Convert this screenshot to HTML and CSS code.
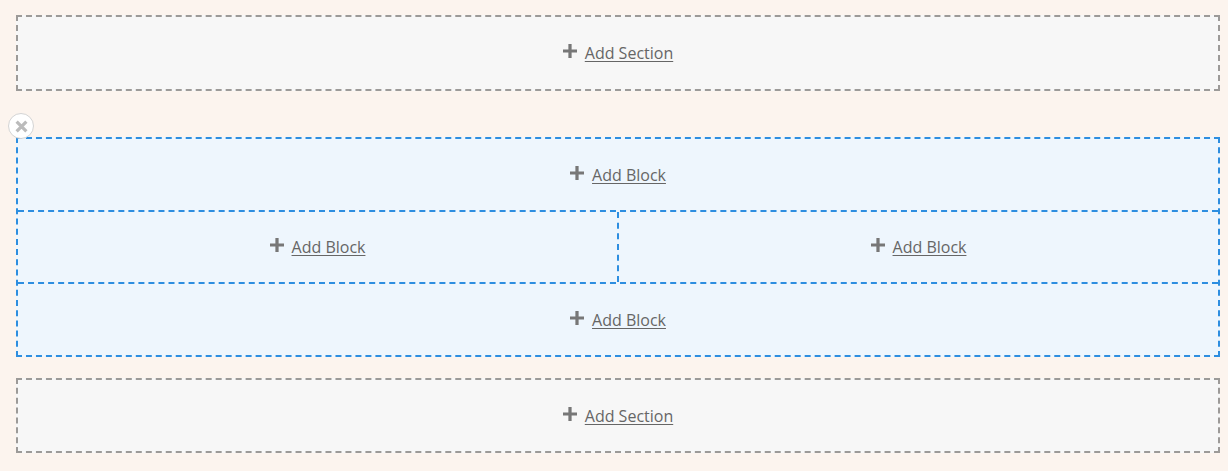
FILE: index.html
```html
<!DOCTYPE html>
<html lang="en">
<head>
  <meta charset="UTF-8" />
  <meta name="viewport" content="width=device-width, initial-scale=1.0"/>
  <title>Layout Builder</title>
  <link rel="stylesheet" href="styles.css">
</head>
<body>
  <div class="builder">
    <div class="add-section">
      <a href="#" class="add-link">
        <svg class="plus" viewBox="0 0 13 13"><path d="M6.5 0v13M0 6.5h13"/></svg>
        <span>Add Section</span>
      </a>
    </div>

    <div class="section">
      <button class="remove" title="Remove section">
        <svg viewBox="0 0 12 12"><path d="M1.5 1.5l9 9M10.5 1.5l-9 9"/></svg>
      </button>
      <div class="row row-first">
        <a href="#" class="add-link">
          <svg class="plus" viewBox="0 0 13 13"><path d="M6.5 0v13M0 6.5h13"/></svg>
          <span>Add Block</span>
        </a>
      </div>
      <div class="row row-split">
        <div class="col">
          <a href="#" class="add-link">
            <svg class="plus" viewBox="0 0 13 13"><path d="M6.5 0v13M0 6.5h13"/></svg>
            <span>Add Block</span>
          </a>
        </div>
        <div class="col">
          <a href="#" class="add-link">
            <svg class="plus" viewBox="0 0 13 13"><path d="M6.5 0v13M0 6.5h13"/></svg>
            <span>Add Block</span>
          </a>
        </div>
      </div>
      <div class="row row-last">
        <a href="#" class="add-link">
          <svg class="plus" viewBox="0 0 13 13"><path d="M6.5 0v13M0 6.5h13"/></svg>
          <span>Add Block</span>
        </a>
      </div>
    </div>

    <div class="add-section add-section-bottom">
      <a href="#" class="add-link">
        <svg class="plus" viewBox="0 0 13 13"><path d="M6.5 0v13M0 6.5h13"/></svg>
        <span>Add Section</span>
      </a>
    </div>
  </div>
</body>
</html>
```

FILE: styles.css
```css
* {
  margin: 0;
  padding: 0;
  box-sizing: border-box;
}

html, body {
  height: 100%;
  font-family: "Open Sans", sans-serif;
  background-color: #fcf4ee;
}

.builder {
  padding: 15px 8px 0 16px;
}

.add-section {
  display: flex;
  justify-content: center;
  align-items: center;
  height: 76px;
  background-color: #f7f7f7;
  border: 2px dashed #9c9a98;
}

.add-section-bottom {
  margin-top: 21px;
  height: 75px;
}

.add-link {
  display: flex;
  align-items: center;
  gap: 8px;
  color: #666;
  font-size: 16px;
  text-decoration: none;
}

.add-link span {
  text-decoration: underline;
  text-underline-offset: 2px;
}

.plus {
  width: 14px;
  height: 14px;
  margin-top: -4px;
}

.plus path {
  stroke: #777;
  stroke-width: 3;
  fill: none;
}

.section {
  position: relative;
  margin-top: 46px;
  background-color: #eef6fd;
  border: 2px dashed #2d8ee0;
}

.row {
  display: flex;
  justify-content: center;
  align-items: center;
  height: 73px;
  border-bottom: 2px dashed #2d8ee0;
}

.row-split {
  height: 72px;
  align-items: stretch;
}

.row-last {
  height: 71px;
  border-bottom: none;
}

.col {
  flex: 1;
  display: flex;
  justify-content: center;
  align-items: center;
}

.col:first-child {
  border-right: 2px dashed #2d8ee0;
}

.remove {
  position: absolute;
  left: -10px;
  top: -26px;
  width: 26px;
  height: 26px;
  border-radius: 50%;
  border: 1px solid #d4d4d4;
  background-color: #fff;
  display: flex;
  justify-content: center;
  align-items: center;
  cursor: pointer;
}

.remove svg {
  width: 13px;
  height: 13px;
}

.remove path {
  stroke: #bbb;
  stroke-width: 3;
  fill: none;
}
```
